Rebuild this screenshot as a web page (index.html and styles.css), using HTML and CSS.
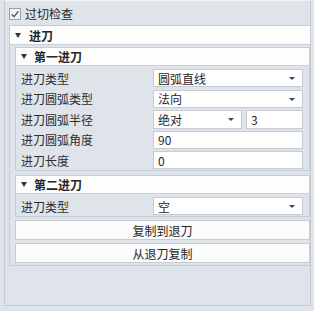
FILE: index.html
```html
<!DOCTYPE html>
<html lang="zh-CN">
<head>
  <meta charset="UTF-8" />
  <title>过切检查</title>
  <link rel="stylesheet" href="styles.css">
</head>
<body>
  <div class="frame">
    <label class="check-row">
      <svg class="checkbox" width="12" height="12" viewBox="0 0 12 12">
        <rect x="0.5" y="0.5" width="11" height="11" fill="#f4f5f6" stroke="#9ba1a8"/>
        <path d="M2.6 6.2 L5 8.6 L9.4 3.2" fill="none" stroke="#5d6167" stroke-width="1.4"/>
      </svg>
      <span>过切检查</span>
    </label>

    <div class="group">
      <div class="group-head"><i class="tri"></i>进刀</div>
      <div class="group-body">
        <div class="sub">
          <div class="sub-head"><i class="tri"></i>第一进刀</div>
          <div class="rows">
            <div class="label">进刀类型</div>
            <div class="field select">圆弧直线</div>
            <div class="label">进刀圆弧类型</div>
            <div class="field select">法向</div>
            <div class="label">进刀圆弧半径</div>
            <div class="pair">
              <div class="field select">绝对</div>
              <div class="field">3</div>
            </div>
            <div class="label">进刀圆弧角度</div>
            <div class="field">90</div>
            <div class="label">进刀长度</div>
            <div class="field">0</div>
          </div>
        </div>

        <div class="sub">
          <div class="sub-head"><i class="tri"></i>第二进刀</div>
          <div class="rows">
            <div class="label">进刀类型</div>
            <div class="field select">空</div>
          </div>
        </div>

        <button class="btn">复制到退刀</button>
        <button class="btn">从退刀复制</button>
      </div>
    </div>
  </div>
</body>
</html>
```

FILE: styles.css
```css
/* Base reset */
* { box-sizing: border-box; margin: 0; padding: 0; }
body {
  font-family: "Noto Sans CJK SC", "Liberation Sans", sans-serif;
  font-size: 12px;
  color: #262626;
  background: #dfe4ea;
  width: 314px;
  height: 311px;
  overflow: hidden;
}
.frame {
  margin-left: 4px;
  width: 307px;
  height: 306px;
  border: 1px solid #c4cbd3;
  border-top-color: #f1f3f5;
  padding-left: 4px;
}
/* Checkbox row */
.check-row {
  display: flex;
  align-items: center;
  gap: 4px;
  height: 24px;
  padding-top: 1px;
}
.checkbox { display: block; }

/* Group panels */
.group {
  border-left: 1px solid #c4cbd3;
  border-top: 1px solid #c4cbd3;
  border-bottom: 1px solid #c4cbd3;
}
.group-head {
  display: flex; align-items: center; gap: 8px;
  height: 19px; padding-left: 5px;
  background: #fdfdfd;
  border-bottom: 1px solid #c9cfd6;
  font-weight: bold;
}
.group-body { padding: 2px 0 2px 5px; }
.tri {
  display: block; width: 0; height: 0;
  border-left: 3.5px solid transparent;
  border-right: 3.5px solid transparent;
  border-top: 5px solid #333;
}
.sub { border: 1px solid #c7cdd4; }
.sub + .sub { margin-top: 4px; }
.sub-head {
  display: flex; align-items: center; gap: 7px;
  height: 18px; padding-left: 5px;
  background: #fdfdfd;
  border-bottom: 1px solid #c9cfd6;
  font-weight: bold;
}
.rows {
  display: grid;
  grid-template-columns: 132px 150px;
  grid-auto-rows: 18px;
  row-gap: 2.5px;
  padding: 3px 0 1px 5px;
}
.label { display: flex; align-items: center; color: #2e2e2e; }
.field {
  position: relative;
  display: flex; align-items: center;
  padding-left: 4px;
  background: #fff;
  border: 1px solid #c6ccd3;
}
.select::after {
  content: "";
  position: absolute; right: 7px; top: 7px;
  border-left: 3px solid transparent;
  border-right: 3px solid transparent;
  border-top: 3px solid #444;
}
.pair { display: grid; grid-template-columns: 89px 57px; gap: 4px; }

/* Buttons */
.btn {
  display: block; width: 100%; height: 20px; margin-top: 3px;
  font: inherit; color: #262626;
  background: #fbfbfb;
  border: 1px solid #c6ccd3;
}
```
